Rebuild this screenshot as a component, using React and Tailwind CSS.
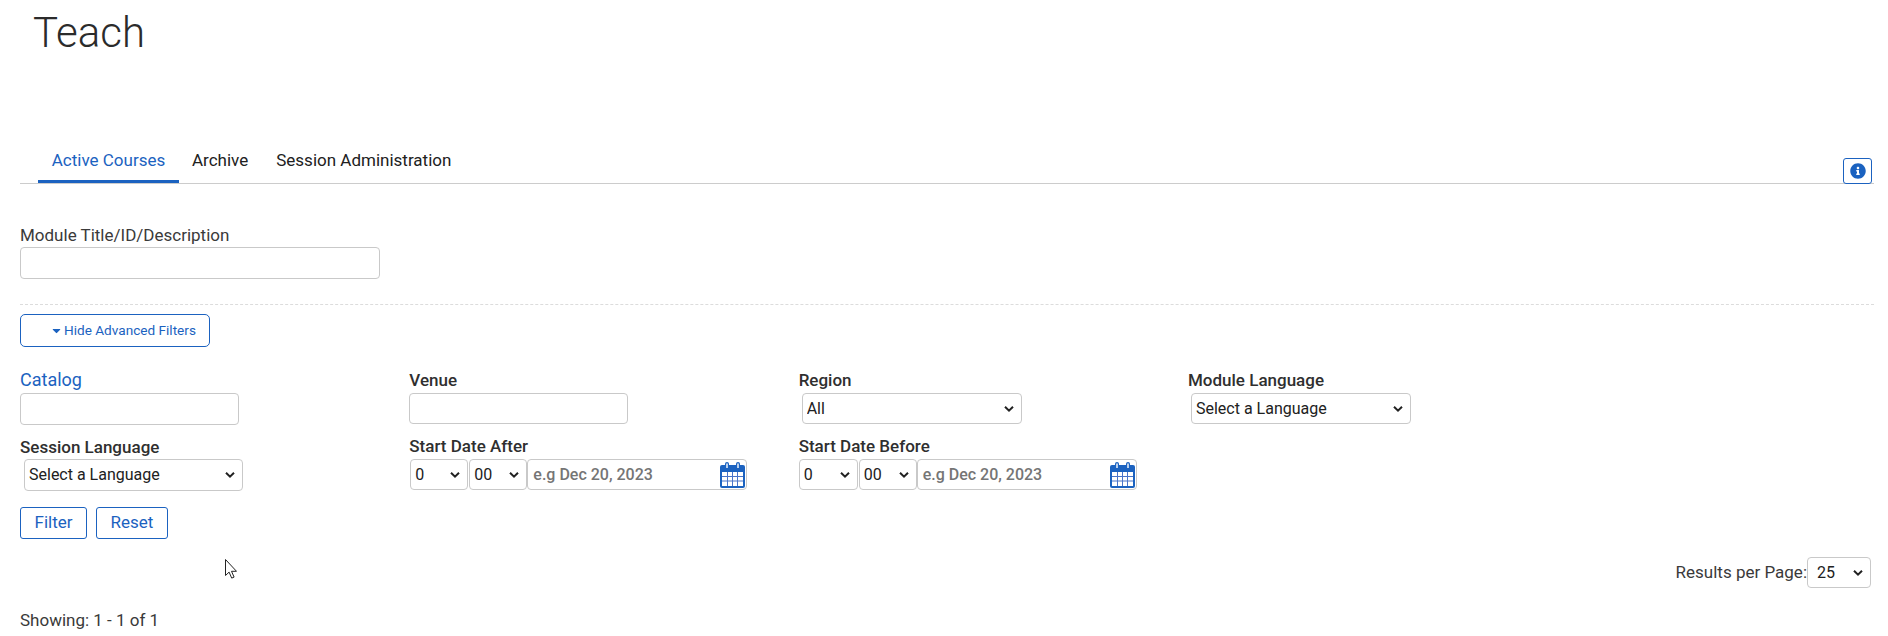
import React from 'react'
import { FaCaretDown, FaInfoCircle } from 'react-icons/fa'

// Calendar icon used next to the date inputs
function CalendarIcon() {
  return (
    <svg width="25" height="26" viewBox="0 0 25 26" className="shrink-0">
      <rect x="0" y="3" width="25" height="23" rx="2" fill="#1b62c0" />
      <rect x="2" y="10" width="21" height="14" fill="#fff" />
      <path d="M7.5 10v14M12.5 10v14M17.5 10v14M2 14.5h21M2 19h21" stroke="#4a74c9" strokeWidth="1" />
      <rect x="5" y="0" width="4" height="8" rx="2" fill="#1b62c0" />
      <rect x="16" y="0" width="4" height="8" rx="2" fill="#1b62c0" />
      <rect x="6.3" y="1.5" width="1.4" height="4.5" fill="#fff" />
      <rect x="17.3" y="1.5" width="1.4" height="4.5" fill="#fff" />
    </svg>
  )
}

function Select({ value, className, padding = 'pl-[4px]' }) {
  return (
    <div className={`relative ${className}`}>
      <select
        defaultValue={value}
        className={`block w-full h-full appearance-none border border-[#c9c9c9] rounded-[4px] bg-white text-[16px] font-normal text-[#212121] ${padding}`}
      >
        <option>{value}</option>
      </select>
      <svg width="10" height="7" viewBox="0 0 10 7" className="absolute right-[8px] top-1/2 -translate-y-1/2 pointer-events-none">
        <path d="M1 1.2l4 4 4-4" fill="none" stroke="#222" strokeWidth="2" />
      </svg>
    </div>
  )
}

function DateGroup({ className, hourWidth, minuteWidth }) {
  return (
    <div className={`flex items-center h-[31px] ${className}`}>
      <Select value="0" className={`h-[31px] ${hourWidth}`} />
      <Select value="00" className={`h-[31px] ml-[1px] ${minuteWidth}`} />
      <div className="flex items-center justify-between w-[220px] h-[31px] border border-[#c9c9c9] rounded-[4px] pl-[5px] pr-[1px]">
        <span className="text-[16px] text-[#757575]">e.g Dec 20, 2023</span>
        <CalendarIcon />
      </div>
    </div>
  )
}

function App() {
  return (
    <div className="relative h-[636px] overflow-hidden bg-white pl-5 pr-[14px] font-['Roboto',sans-serif] text-[#333]">
      <h1 className="pl-[13px] pt-[5px] h-[137px] text-[42px] leading-[56px] font-light text-[#2b2b2b]">Teach</h1>

      {/* Tabs */}
      <div className="relative flex h-[47px] pl-[18px] border-b border-[#cccccc] text-[17px] leading-[47px] text-[#212121]">
        <div className="w-[141px] h-[46px] text-center border-b-[3px] border-[#1b62c0] text-[#1b62c0]">Active Courses</div>
        <div className="ml-[13px]">Archive</div>
        <div className="ml-[28px]">Session Administration</div>
        <button className="absolute right-[2px] top-[21px] flex items-center justify-center w-[29px] h-[26px] border border-[#1b62c0] rounded-[3px] bg-white text-[#1b62c0]">
          <FaInfoCircle size={16} />
        </button>
      </div>

      {/* Basic filter */}
      <label className="block mt-[41px] text-[17px] leading-[20px] text-[#3a3a3a]">Module Title/ID/Description</label>
      <input className="block mt-[2px] w-[360px] h-[32px] border border-[#c9c9c9] rounded-[4px]" />
      <div className="mt-[25px] border-t border-dashed border-[#dcdcdc]" />
      <button className="flex items-center mt-[9px] w-[190px] h-[33px] pl-[29px] border border-[#1b62c0] rounded-[5px] text-[13.6px] text-[#1b62c0]">
        <FaCaretDown size={13} className="mr-[1px]" />
        Hide Advanced Filters
      </button>

      {/* Advanced filters */}
      <div className="grid grid-cols-[repeat(4,389.33px)] mt-[23px] text-[17px] leading-[20px] font-medium text-[#2f2f2f]">
        <div>
          <label className="block h-[23px] text-[18px] font-normal text-[#1b62c0]">Catalog</label>
          <input className="block w-[219px] h-[32px] border border-[#c9c9c9] rounded-[4px]" />
        </div>
        <div>
          <label className="block h-[23px]">Venue</label>
          <input className="block w-[219px] h-[31px] border border-[#c9c9c9] rounded-[4px]" />
        </div>
        <div>
          <label className="block h-[23px]">Region</label>
          <Select value="All" className="ml-[3px] w-[220px] h-[31px]" />
        </div>
        <div>
          <label className="block h-[23px]">Module Language</label>
          <Select value="Select a Language" className="ml-[3px] w-[220px] h-[31px]" />
        </div>
        <div className="mt-[12px]">
          <label className="block h-[22px]">Session Language</label>
          <Select value="Select a Language" className="ml-[4px] w-[219px] h-[32px]" />
        </div>
        <div className="mt-[11px]">
          <label className="block h-[23px]">Start Date After</label>
          <DateGroup className="ml-[1px]" hourWidth="w-[58px]" minuteWidth="w-[58px]" />
        </div>
        <div className="mt-[11px]">
          <label className="block h-[23px]">Start Date Before</label>
          <DateGroup hourWidth="w-[59px]" minuteWidth="w-[58px]" />
        </div>
      </div>

      <div className="flex gap-[9px] mt-[16px] text-[17px]">
        <button className="w-[67px] h-[32px] border border-[#1b62c0] rounded-[3px] text-[#1b62c0]">Filter</button>
        <button className="w-[72px] h-[32px] border border-[#1b62c0] rounded-[3px] text-[#1b62c0]">Reset</button>
      </div>

      <div className="flex items-center justify-end mt-[18px] pr-[3px] text-[17px] text-[#3a3a3a]">
        <span>Results per Page:</span>
        <Select value="25" className="w-[64px] h-[31px]" padding="pl-[9px]" />
      </div>

      <div className="mt-[22px] text-[17px] leading-[20px] text-[#3a3a3a]">Showing: 1 - 1 of 1</div>

      {/* Mouse pointer caught in the screenshot */}
      <svg width="12" height="20" viewBox="0 0 12 20" className="absolute left-[225px] top-[559px]">
        <path d="M0.5 0.5v16l3.6-3.4 2.6 6 2.4-1-2.6-5.8h5z" fill="#fff" stroke="#222" strokeWidth="1" />
      </svg>
    </div>
  )
}

export default App
